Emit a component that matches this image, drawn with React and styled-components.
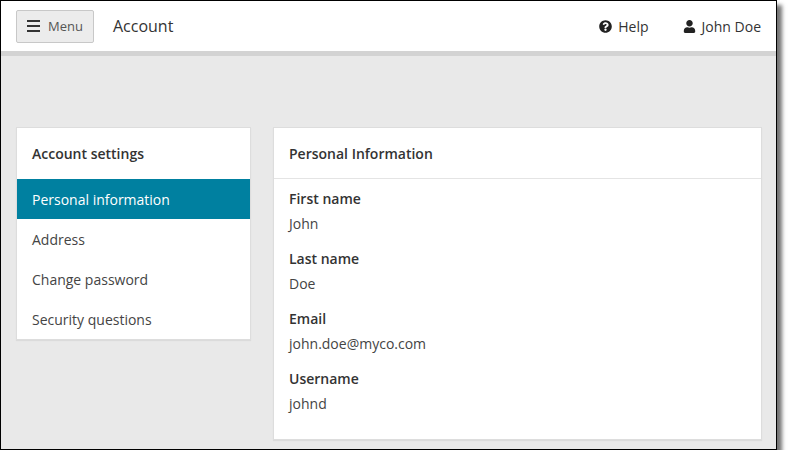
import React from 'react';
import styled, { createGlobalStyle } from 'styled-components';
import { FaQuestionCircle, FaUser } from 'react-icons/fa';

const Global = createGlobalStyle`
  body { margin: 0; background: #fff; font-family: 'Open Sans', 'Liberation Sans', sans-serif; }
  * { box-sizing: border-box; }
`;

const Frame = styled.div`
  width: 777px;
  height: 450px;
  border: 1px solid #000;
  box-shadow: 5px 5px 4px rgba(0, 0, 0, 0.55);
  background: #e9e9e9;
  display: flex;
  flex-direction: column;
  overflow: hidden;
`;

const TopBar = styled.header`
  flex-shrink: 0;
  height: 55px;
  background: #fff;
  border-bottom: 5px solid #d3d3d3;
  display: flex;
  align-items: center;
  padding: 0 15px;
`;

const MenuButton = styled.button`
  display: flex;
  align-items: center;
  gap: 8px;
  height: 33px;
  padding: 0 10px;
  background: #ececec;
  border: 1px solid #c8c8c8;
  border-radius: 2px;
  font-family: inherit;
  font-size: 13px;
  color: #555;
`;

const Bars = styled.span`
  display: flex;
  flex-direction: column;
  gap: 2.5px;
  span { display: block; width: 13px; height: 2.5px; background: #333; }
`;

const Title = styled.div`
  margin-left: 19px;
  font-size: 16px;
  color: #333;
`;

const NavLink = styled.div`
  display: flex;
  align-items: center;
  gap: 6px;
  font-size: 14px;
  color: #333;
  margin-left: ${p => p.$first ? 'auto' : '34px'};
  svg { font-size: 13px; color: #222; }
`;

const Body = styled.main`
  display: flex;
  align-items: flex-start;
  gap: 22px;
  padding: 71px 15px 0 15px;
`;

const Card = styled.section`
  background: #fff;
  border: 1px solid #ddd;
  box-shadow: 0 1px 1px rgba(0,0,0,0.06);
  width: ${p => p.$w};
  flex-shrink: 0;
`;

const CardHead = styled.div`
  height: 51px;
  display: flex;
  align-items: center;
  padding: 0 15px;
  font-size: 14px;
  font-weight: 600;
  color: #333;
  border-bottom: ${p => p.$divider ? '1px solid #e4e4e4' : 'none'};
`;

const NavItem = styled.div`
  height: 40px;
  display: flex;
  align-items: center;
  padding: 0 15px;
  font-size: 14px;
  color: ${p => p.$active ? '#fff' : '#444'};
  background: ${p => p.$active ? '#0080a0' : '#fff'};
`;

const Fields = styled.div`
  padding: 10px 15px 10px;
`;

const Field = styled.div`
  margin-bottom: 15px;
`;

const Label = styled.div`
  font-size: 14px;
  line-height: 20px;
  font-weight: 600;
  color: #333;
`;

const Value = styled.div`
  margin-top: 5px;
  font-size: 14px;
  line-height: 20px;
  color: #444;
`;

const nav = ['Personal information', 'Address', 'Change password', 'Security questions'];
const fields = [
  ['First name', 'John'],
  ['Last name', 'Doe'],
  ['Email', 'john.doe@myco.com'],
  ['Username', 'johnd'],
];

export default function App() {
  return (
    <>
      <Global />
      <Frame>
        <TopBar>
          <MenuButton><Bars><span /><span /><span /></Bars>Menu</MenuButton>
          <Title>Account</Title>
          <NavLink $first><FaQuestionCircle />Help</NavLink>
          <NavLink><FaUser />John Doe</NavLink>
        </TopBar>
        <Body>
          <Card $w="235px">
            <CardHead>Account settings</CardHead>
            {nav.map((n, i) => <NavItem key={n} $active={i === 0}>{n}</NavItem>)}
          </Card>
          <Card $w="489px">
            <CardHead $divider>Personal Information</CardHead>
            <Fields>
              {fields.map(([l, v]) => (
                <Field key={l}><Label>{l}</Label><Value>{v}</Value></Field>
              ))}
            </Fields>
          </Card>
        </Body>
      </Frame>
    </>
  );
}
